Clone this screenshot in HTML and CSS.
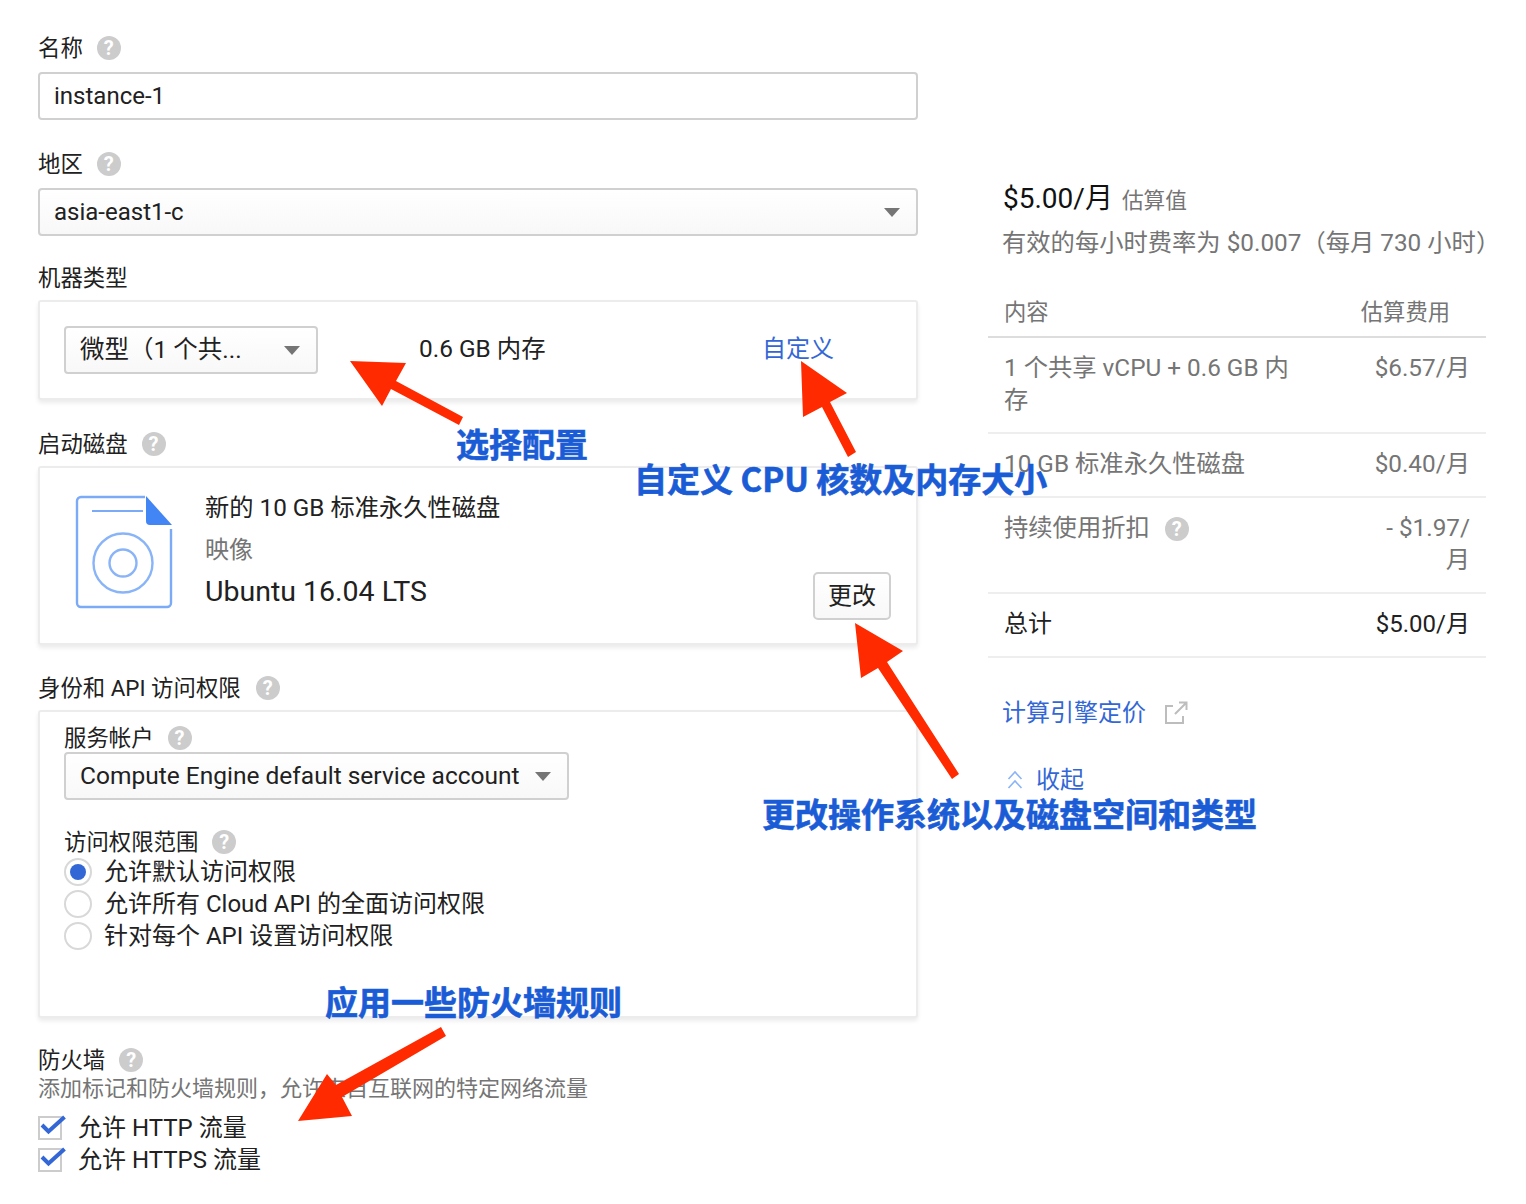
FILE: index.html
```html
<!DOCTYPE html>
<html lang="zh-CN">
<head>
<meta charset="utf-8">
<title>创建实例</title>
<link rel="stylesheet" href="styles.css">
</head>
<body>
<div class="page">
  <main class="form">
    <div class="label"><span class="text">名称</span><span class="help">?</span></div>
    <div class="field">instance-1</div>

    <div class="label gap-28"><span class="text">地区</span><span class="help">?</span></div>
    <div class="field select"><span>asia-east1-c</span><i class="caret"></i></div>

    <div class="label gap-26 tight"><span class="text">机器类型</span></div>
    <section class="card machine">
      <div class="field select machine-select"><span>微型（1 个共...</span><i class="caret"></i></div>
      <div class="memory">0.6 GB 内存</div>
      <a class="link customize">自定义</a>
    </section>

    <div class="label gap-28 tight"><span class="text">启动磁盘</span><span class="help">?</span></div>
    <section class="card disk">
      <svg class="disk-icon" width="98" height="114" viewBox="0 0 98 114">
        <path d="M70 2H6a4 4 0 0 0-4 4v102a4 4 0 0 0 4 4h86a4 4 0 0 0 4-4V34" fill="none" stroke="#7baaf7" stroke-width="2.4"/>
        <path d="M71 1 97 30H75a4 4 0 0 1-4-4z" fill="#4285f4"/>
        <path d="M17 16H68" stroke="#7baaf7" stroke-width="2"/>
        <circle cx="48" cy="68" r="29.5" fill="none" stroke="#8ab4f8" stroke-width="2.4"/>
        <circle cx="48" cy="68" r="13.5" fill="none" stroke="#8ab4f8" stroke-width="2.4"/>
      </svg>
      <div class="disk-text">
        <div class="disk-title">新的 10 GB 标准永久性磁盘</div>
        <div class="muted">映像</div>
        <div class="os">Ubuntu 16.04 LTS</div>
      </div>
      <button class="button"><span>更改</span></button>
    </section>

    <div class="label gap-27 tight wide-gap"><span class="text">身份和 API 访问权限</span><span class="help">?</span></div>
    <section class="card identity">
      <div class="label sub"><span class="text">服务帐户</span><span class="help">?</span></div>
      <div class="field select account"><span>Compute Engine default service account</span><i class="caret"></i></div>
      <div class="label sub scope"><span class="text">访问权限范围</span><span class="help">?</span></div>
      <div class="option"><i class="radio on"></i><span class="text">允许默认访问权限</span></div>
      <div class="option"><i class="radio"></i><span class="text">允许所有 Cloud API 的全面访问权限</span></div>
      <div class="option"><i class="radio"></i><span class="text">针对每个 API 设置访问权限</span></div>
    </section>

    <div class="label gap-26"><span class="text">防火墙</span><span class="help">?</span></div>
    <p class="hint">添加标记和防火墙规则，允许来自互联网的特定网络流量</p>
    <div class="option check-row first"><i class="checkbox"><svg width="30" height="28" viewBox="0 0 30 28"><path d="M4 9l6.500 6.500L26.500 1" fill="none" stroke="#3367d6" stroke-width="4"/></svg></i><span class="text">允许 HTTP 流量</span></div>
    <div class="option check-row"><i class="checkbox"><svg width="30" height="28" viewBox="0 0 30 28"><path d="M4 9l6.500 6.500L26.500 1" fill="none" stroke="#3367d6" stroke-width="4"/></svg></i><span class="text">允许 HTTPS 流量</span></div>
  </main>

  <aside class="summary">
    <div class="price"><span class="amount">$5.00/月</span><span class="estimate">估算值</span></div>
    <div class="rate">有效的每小时费率为 $0.007（每月 730 小时）</div>
    <div class="table">
      <div class="row head"><div class="item">内容</div><div class="cost">估算费用</div></div>
      <div class="row"><div class="item">1 个共享 vCPU + 0.6 GB 内存</div><div class="cost">$6.57/月</div></div>
      <div class="row"><div class="item">10 GB 标准永久性磁盘</div><div class="cost">$0.40/月</div></div>
      <div class="row"><div class="item"><span>持续使用折扣</span><span class="help">?</span></div><div class="cost">- $1.97/月</div></div>
      <div class="row total"><div class="item">总计</div><div class="cost">$5.00/月</div></div>
    </div>
    <a class="link pricing"><span class="text">计算引擎定价</span>
      <svg width="24" height="24" viewBox="0 0 24 24"><path d="M9 5H2v17h17v-7M11 13 22 2M15 1.500h7.500V9" fill="none" stroke="#bdbdbd" stroke-width="2"/></svg>
    </a>
    <a class="link collapse">
      <svg class="chevrons" width="16" height="20" viewBox="0 0 16 20"><path d="M1.500 9 8 2l6.500 7M1.500 18 8 11l6.500 7" fill="none" stroke="#8ab4f8" stroke-width="1.600"/></svg>
      <span class="text">收起</span>
    </a>
  </aside>
</div>

<div class="annotations">
  <svg class="arrows" width="1526" height="1204" viewBox="0 0 1526 1204">
    <polygon points="350,361 406,363 396,381 463,417 459,425 391,389 382,406"/>
    <polygon points="801,361 847,393 830,402 856,452 848,457 822,407 803,417"/>
    <polygon points="855,623 903,651 887,662 959,774 952,779 878,668 861,678"/>
    <polygon points="441,1027 446,1036 342,1097 352,1116 298,1121 327,1074 336,1085"/>
  </svg>
  <div class="note note-config">选择配置</div>
  <div class="note note-custom">自定义 CPU 核数及内存大小</div>
  <div class="note note-change">更改操作系统以及磁盘空间和类型</div>
  <div class="note note-firewall">应用一些防火墙规则</div>
</div>
</body>
</html>
```

FILE: styles.css
```css
* { box-sizing: border-box; }
html, body { margin: 0; padding: 0; background: #fff; }
body {
  position: relative;
  font-family: Roboto, "Noto Sans CJK SC", sans-serif;
  font-size: 24px;
  color: #212121;
  overflow: hidden;
  height: 1204px;
}
.page { display: flex; gap: 70px; padding: 32px 0 0 38px; }
.form { width: 880px; flex: none; }
.summary { width: 498px; flex: none; padding-top: 144px; }

.text { line-height: 28px; }
.label { display: flex; align-items: center; gap: 14px; height: 32px; font-size: 22.4px; margin-bottom: 8px; color: #212121; }
.label.tight { margin-bottom: 6px; }
.label.wide-gap { gap: 15px; }
.gap-28 { margin-top: 28px; }
.gap-26 { margin-top: 26px; }
.gap-27 { margin-top: 27px; }
.label.sub { margin-bottom: -2px; }
.scope { margin-top: 26px; }

.help {
  display: inline-flex; align-items: center; justify-content: center;
  width: 24px; height: 24px; flex: none; border-radius: 50%;
  background: #ccc; color: #fff; font-size: 20px; font-weight: 700; line-height: 1;
}

.field {
  display: flex; align-items: center; height: 48px; padding: 0 14px;
  border: 2px solid #d0d0d0; border-radius: 4px; background: #fff; color: #212121; line-height: 1;
}
.select { justify-content: space-between; background: linear-gradient(#fff, #f8f8f8); padding-right: 16px; }
.caret { width: 0; height: 0; border-left: 8px solid transparent; border-right: 8px solid transparent; border-top: 9px solid #757575; flex: none; }

.card { border: 2px solid #ececec; border-radius: 3px; background: #fff; box-shadow: 0 3px 4px rgba(0, 0, 0, .08); }

.machine { display: flex; align-items: center; height: 100px; padding: 0 24px; }
.machine-select { width: 254px; flex: none; font-size: 24.500px; }
.memory { margin-left: 101px; width: 343px; flex: none; font-size: 24.400px; line-height: 30px; margin-bottom: 2px; }

.link { color: #3367d6; }
.customize { line-height: 30px; margin-bottom: 2px; }

.disk { display: flex; height: 179px; padding: 19px 25px 23px 35px; }
.disk-icon { flex: none; margin-top: 8px; }
.disk-text { margin-left: 32px; line-height: 42px; flex: 1; }
.disk-title { font-size: 24.250px; }
.muted { color: #757575; }
.os { font-size: 28.500px; color: #212121; }
.button {
  display: flex; align-items: center; justify-content: center;
  align-self: flex-end; width: 78px; height: 48px; padding: 0 0 5px;
  border: 2px solid #d0d0d0; border-radius: 5px; background: linear-gradient(#fff, #f8f8f8);
  font: inherit; color: #212121;
}

.identity { height: 308px; padding: 10px 24px 0; }
.account { width: 505px; font-size: 24.500px; }

.option { display: flex; align-items: center; gap: 12px; height: 32px; }
.radio { width: 28px; height: 28px; border: 2.500px solid #d8d8d8; border-radius: 50%; flex: none; display: flex; align-items: center; justify-content: center; }
.radio.on::after { content: ""; width: 16px; height: 16px; border-radius: 50%; background: #3367d6; }

.hint { margin: -8px 0 0; font-size: 22px; line-height: 26px; color: #757575; }
.check-row { gap: 16px; }
.check-row.first { margin-top: 10px; }
.checkbox { position: relative; width: 24px; height: 24px; border: 2px solid #ccc; flex: none; }
.checkbox svg { position: absolute; left: -2px; top: -2px; overflow: visible; }

.price { display: flex; align-items: baseline; height: 36px; padding-left: 15px; }
.amount { font-size: 28px; color: #111; }
.estimate { font-size: 21.700px; margin-left: 9px; color: #757575; }
.rate { margin-top: 15px; padding-left: 14px; line-height: 32px; font-size: 24.300px; color: #757575; white-space: nowrap; }

.table { margin-top: 37px; }
.row { display: flex; justify-content: space-between; padding: 14px 16px 16px; line-height: 32px; border-bottom: 2px solid #eee; color: #757575; font-size: 24.300px; }
.row .item { width: 300px; display: flex; flex-wrap: wrap; align-items: flex-start; }
.row .item .help { margin: 5px 0 0 15px; }
.row .cost { width: 98px; text-align: right; flex: none; }
.row.head { padding: 0 36px 6px 16px; height: 42px; border-bottom-color: #ddd; font-size: 22.300px; }
.row.head .item { width: auto; }
.row.head .cost { width: auto; }
.row.total { color: #212121; font-size: 24px; }

.pricing { display: flex; align-items: center; gap: 18px; margin: 37px 0 0 14px; height: 36px; }
.collapse { display: flex; align-items: center; gap: 13px; margin: 31px 0 0 19px; height: 36px; }
.chevrons { margin-top: -1px; }

.annotations { position: absolute; inset: 0; pointer-events: none; }
.arrows { position: absolute; left: 0; top: 0; }
.arrows polygon { fill: #ff2a00; }
.note {
  position: absolute; font-family: "Noto Sans CJK SC", sans-serif; font-weight: 700;
  font-size: 33px; line-height: 40px; color: #1a5bd6; white-space: nowrap;
  -webkit-text-stroke: .6px #1a5bd6;
}
.note-config { left: 456px; top: 423px; }
.note-custom { left: 634px; top: 458px; }
.note-change { left: 762px; top: 793px; }
.note-firewall { left: 325px; top: 981px; }
```
